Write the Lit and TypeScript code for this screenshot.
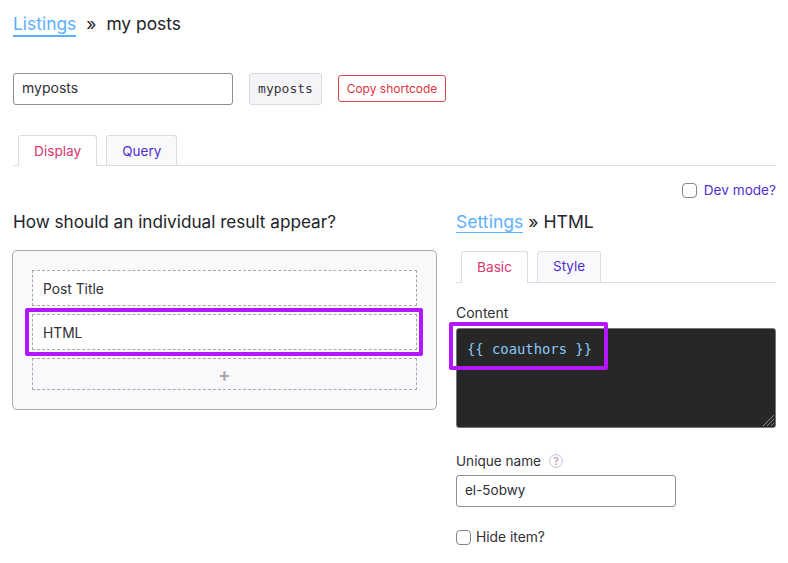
import { LitElement, html, css } from "lit";
import { customElement } from "lit/decorators.js";

@customElement("app-root")
export class AppRoot extends LitElement {
  static styles = css`
    :host {
      display: block;
      height: 563px;
      overflow: hidden;
      background: #fff;
      font-family: Inter, "Liberation Sans", sans-serif;
      color: #2a2a30;
      font-size: 14px;
      box-sizing: border-box;
      padding: 12px 12px 0 13px;
    }
    * { box-sizing: border-box; }
    a { text-decoration: none; color: inherit; }
    .crumb {
      display: flex;
      align-items: baseline;
      font-size: 17.4px;
      line-height: 24px;
      height: 24px;
      color: #23232a;
    }
    .link {
      color: #5cb1ff;
      border-bottom: 1px solid #5cb1ff;
      line-height: 20px;
    }
    .crumb .link { border-bottom-width: 2px; line-height: 22px; }
    .sep { margin: 0 10px 0 10px; }
    .name-row {
      display: flex;
      align-items: flex-start;
      margin-top: 37px;
      height: 32px;
    }
    .input {
      height: 32px;
      border: 1px solid #8e8e93;
      border-radius: 3px;
      background: #fff;
      padding: 0 8px 3px;
      display: flex;
      align-items: center;
      font-size: 14px;
      color: #2f2f36;
    }
    .name-input { width: 220px; }
    .code {
      margin-left: 16px;
      width: 73px;
      height: 32px;
      background: #f5f5f8;
      border: 1px solid #d8d8de;
      border-radius: 3px;
      padding-bottom: 2px;
      display: flex;
      align-items: center;
      justify-content: center;
      font-family: "DejaVu Sans Mono", "Liberation Mono", monospace;
      font-size: 13px;
      color: #35353b;
    }
    .copy {
      margin: 2px 0 0 16px;
      width: 108px;
      height: 27px;
      border: 1px solid #e0434b;
      border-radius: 3px;
      color: #e0343f;
      background: #fff;
      display: flex;
      align-items: center;
      justify-content: center;
      font-size: 12px;
    }
    .tabs {
      display: flex;
      gap: 9px;
      padding-left: 5px;
      border-bottom: 1px solid #dcdce2;
      height: 31px;
    }
    .tabs.main { margin-top: 30px; }
    .tabs.sub { margin-top: 17px; height: 32px; }
    .tabs.sub .tab { padding-bottom: 2px; }
    .tab {
      height: 100%;
      padding: 0 15px;
      border: 1px solid #dcdce2;
      border-bottom: none;
      border-radius: 3px 3px 0 0;
      background: #f9f9fc;
      color: #4f2fd0;
      display: flex;
      align-items: center;
      font-size: 13.5px;
    }
    .tab.active {
      background: #fff;
      color: #d9386f;
      font-size: 13.7px;
      height: calc(100% + 1px);
    }
    .dev-row {
      display: flex;
      justify-content: flex-end;
      align-items: center;
      gap: 7px;
      height: 20px;
      margin-top: 14px;
      color: #4f2fd0;
      font-size: 13.6px;
    }
    .check {
      width: 15px;
      height: 15px;
      border: 1px solid #85858b;
      border-radius: 4px;
      background: #fff;
      flex: none;
    }
    .columns {
      display: grid;
      grid-template-columns: 424px 320px;
      column-gap: 19px;
      margin-top: 10px;
    }
    .heading {
      font-size: 17.15px;
      line-height: 24px;
      height: 24px;
      color: #23232a;
    }
    .heading.right { font-size: 17.6px; }
    .heading .link { line-height: 21px; }
    .card {
      margin-top: 16px;
      margin-left: -1px;
      width: 425px;
      height: 160px;
      background: #f9f9fc;
      border: 1px solid #a9a9ad;
      border-radius: 5px;
      padding: 19px 19px 0 19px;
      display: flex;
      flex-direction: column;
      gap: 8px;
    }
    .slot {
      height: 36px;
      background: #fff;
      border: 1px dashed #a9a9ad;
      padding: 2px 0 0 10px;
      display: flex;
      align-items: center;
      font-size: 13.8px;
      color: #2f2f36;
      position: relative;
    }
    .slot.add {
      height: 32px;
      background: transparent;
      justify-content: center;
      padding: 0;
      color: #a9a9ad;
      font-size: 19px;
      font-weight: 600;
    }
    .mark {
      position: absolute;
      border: 4px solid #b316ff;
      border-radius: 2px;
      pointer-events: none;
    }
    .mark.row { left: -8px; right: -7px; top: -7px; bottom: -7px; }
    .mark.ta { left: -8px; top: -7px; width: 159px; height: 48px; }
    .label {
      font-size: 14px;
      line-height: 20px;
      color: #2f2f36;
      display: flex;
      align-items: center;
      gap: 8px;
    }
    .content-label { margin-top: 20px; }
    .editor {
      margin-top: 5px;
      height: 100px;
      background: #272727;
      border: 1px solid #77777a;
      border-radius: 3px;
      position: relative;
      padding: 10px 10px;
      font-family: "DejaVu Sans Mono", "Liberation Mono", monospace;
      font-size: 13.85px;
      line-height: 20px;
      color: #8cc9fb;
    }
    .grip {
      position: absolute;
      right: 0;
      bottom: 0;
      width: 14px;
      height: 14px;
      display: block;
    }
    .unique { margin-top: 23px; font-size: 13.6px; }
    .help {
      width: 14px;
      height: 14px;
      display: block;
    }
    .uinput { width: 220px; margin-top: 4px; font-size: 13.5px; }
    .hide {
      margin-top: 20px;
      display: flex;
      align-items: center;
      gap: 5px;
      font-size: 13.8px;
      line-height: 20px;
      color: #2f2f36;
    }
  `;

  render() {
    return html`
      <div class="crumb">
        <a class="link">Listings</a><span class="sep">»</span><span>my posts</span>
      </div>

      <div class="name-row">
        <div class="input name-input">myposts</div>
        <div class="code">myposts</div>
        <div class="copy">Copy shortcode</div>
      </div>

      <div class="tabs main">
        <div class="tab active">Display</div>
        <div class="tab">Query</div>
      </div>

      <div class="dev-row"><span class="check"></span><span>Dev mode?</span></div>

      <div class="columns">
        <section>
          <div class="heading">How should an individual result appear?</div>
          <div class="card">
            <div class="slot">Post Title</div>
            <div class="slot">HTML<span class="mark row"></span></div>
            <div class="slot add">+</div>
          </div>
        </section>

        <section>
          <div class="heading right"><a class="link">Settings</a> » HTML</div>
          <div class="tabs sub">
            <div class="tab active">Basic</div>
            <div class="tab">Style</div>
          </div>
          <div class="label content-label">Content</div>
          <div class="editor">
            {{ coauthors }}
            <span class="mark ta"></span>
            <svg class="grip" viewBox="0 0 14 14" fill="none" stroke="#8a8a8a" stroke-width="1">
              <path d="M2 13 L13 2 M6 13 L13 6 M10 13 L13 10" />
            </svg>
          </div>
          <div class="label unique">
            <span>Unique name</span>
            <svg class="help" viewBox="0 0 14 14" fill="none">
              <circle cx="7" cy="7" r="6.4" stroke="#c6c0da" stroke-width="1" />
              <text x="7" y="10.5" text-anchor="middle" font-size="10" font-family="Inter, sans-serif" fill="#a9869b">?</text>
            </svg>
          </div>
          <div class="input uinput">el-5obwy</div>
          <div class="hide"><span class="check"></span><span>Hide item?</span></div>
        </section>
      </div>
    `;
  }
}
